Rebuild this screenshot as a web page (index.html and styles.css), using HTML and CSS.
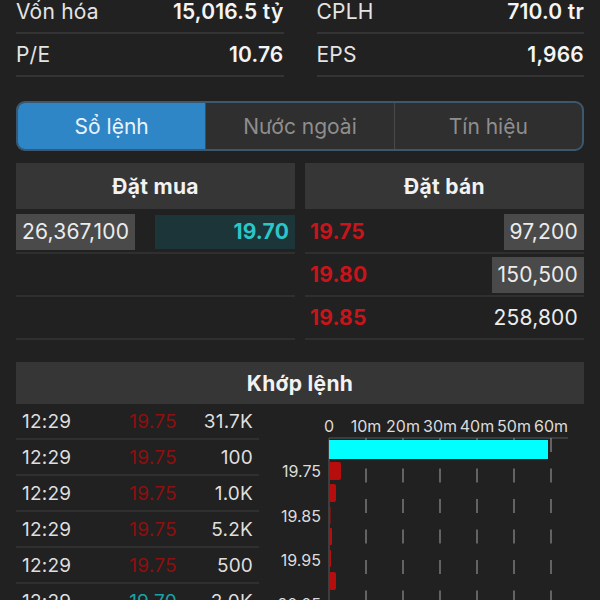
FILE: index.html
```html
<!DOCTYPE html>
<html lang="vi">
<head>
    <meta charset="UTF-8">
    <meta name="viewport" content="width=device-width, initial-scale=1.0">
    <title>Sổ lệnh</title>
    <link rel="stylesheet" href="styles.css">
</head>
<body>

    <!-- Chỉ số cơ bản -->
    <div class="stats">
        <div class="stat-col">
            <div class="stat-row"><span>Vốn hóa</span><b>15,016.5 tỷ</b></div>
            <div class="stat-row"><span>P/E</span><b>10.76</b></div>
        </div>
        <div class="stat-col">
            <div class="stat-row"><span>CPLH</span><b>710.0 tr</b></div>
            <div class="stat-row"><span>EPS</span><b>1,966</b></div>
        </div>
    </div>

    <!-- Tabs -->
    <div class="tabs">
        <div class="tab active">Sổ lệnh</div>
        <div class="tab">Nước ngoài</div>
        <div class="tab">Tín hiệu</div>
    </div>

    <!-- Sổ lệnh -->
    <div class="book">
        <div class="book-side">
            <div class="side-title">Đặt mua</div>
            <div class="book-row">
                <span class="vol-box">26,367,100</span>
                <span class="buy-price">19.70</span>
            </div>
            <div class="book-row"></div>
            <div class="book-row"></div>
        </div>
        <div class="book-side">
            <div class="side-title">Đặt bán</div>
            <div class="book-row">
                <span class="sell-price">19.75</span>
                <span class="vol-box">97,200</span>
            </div>
            <div class="book-row">
                <span class="sell-price">19.80</span>
                <span class="vol-box">150,500</span>
            </div>
            <div class="book-row">
                <span class="sell-price">19.85</span>
                <span class="vol-plain">258,800</span>
            </div>
        </div>
    </div>

    <!-- Khớp lệnh -->
    <div class="match-title">Khớp lệnh</div>
    <div class="match">
        <div class="trades">
            <div class="trade"><span>12:29</span><span class="t-price">19.75</span><span class="t-vol">31.7K</span></div>
            <div class="trade"><span>12:29</span><span class="t-price">19.75</span><span class="t-vol">100</span></div>
            <div class="trade"><span>12:29</span><span class="t-price">19.75</span><span class="t-vol">1.0K</span></div>
            <div class="trade"><span>12:29</span><span class="t-price">19.75</span><span class="t-vol">5.2K</span></div>
            <div class="trade"><span>12:29</span><span class="t-price">19.75</span><span class="t-vol">500</span></div>
            <div class="trade"><span>12:29</span><span class="t-price up">19.70</span><span class="t-vol">2.0K</span></div>
        </div>

        <svg class="chart" width="314" height="196" viewBox="0 0 314 196">
            <!-- trục x -->
            <g class="axis-label" text-anchor="middle">
                <text x="59" y="28">0</text>
                <text x="96" y="28">10m</text>
                <text x="133" y="28">20m</text>
                <text x="170" y="28">30m</text>
                <text x="207" y="28">40m</text>
                <text x="244" y="28">50m</text>
                <text x="281" y="28">60m</text>
            </g>
            <line x1="59" y1="34" x2="298" y2="34" stroke="#5a5a5a" stroke-width="1"/>
            <line x1="59" y1="34" x2="59" y2="196" stroke="#5a5a5a" stroke-width="1"/>

            <!-- lưới -->
            <g stroke="#7a7a7a" stroke-width="1.5" stroke-dasharray="14 16.5">
                <line x1="96" y1="34" x2="96" y2="196"/>
                <line x1="133" y1="34" x2="133" y2="196"/>
                <line x1="170" y1="34" x2="170" y2="196"/>
                <line x1="207" y1="34" x2="207" y2="196"/>
                <line x1="244" y1="34" x2="244" y2="196"/>
                <line x1="281" y1="34" x2="281" y2="196"/>
            </g>

            <!-- khối lượng -->
            <rect x="59" y="36" width="219" height="19" fill="#00ffff"/>
            <g fill="#b80d0d">
                <rect x="59" y="58" width="12" height="18" rx="2"/>
                <rect x="59" y="80" width="7" height="18" rx="2"/>
                <rect x="59" y="103" width="1.5" height="17"/>
                <rect x="59" y="124" width="3" height="17" rx="1"/>
                <rect x="59" y="146" width="2" height="17" rx="1"/>
                <rect x="59" y="168" width="7" height="18" rx="2"/>
            </g>

            <!-- trục y -->
            <g class="axis-label" text-anchor="end">
                <text x="51" y="73">19.75</text>
                <text x="51" y="118">19.85</text>
                <text x="51" y="162">19.95</text>
                <text x="51" y="206">20.05</text>
            </g>
        </svg>
    </div>

</body>
</html>
```

FILE: styles.css
```css
* {
    margin: 0;
    padding: 0;
    box-sizing: border-box;
}

body {
    font-family: 'Inter', 'Roboto', sans-serif;
    background-color: #212121;
    color: #ececec;
    overflow: hidden;
}

/* chỉ số */
.stats {
    display: grid;
    grid-template-columns: 1fr 1fr;
    column-gap: 33px;
    padding: 0 16px;
    margin-top: -9px;
}

.stat-row {
    display: flex;
    justify-content: space-between;
    align-items: center;
    height: 43px;
    border-bottom: 2px solid #343434;
    font-size: 21px;
    line-height: 1.1;
    letter-spacing: 0.2px;
}

.stat-row span {
    color: #e4e4e4;
}

.stat-row b {
    font-weight: 600;
    color: #f4f4f4;
}

/* tabs */
.tabs {
    display: flex;
    margin: 24px 16px 0;
    height: 50px;
    border: 2px solid #3b5870;
    border-radius: 9px;
    overflow: hidden;
    background-color: #2f2f2f;
}

.tab {
    flex: 1;
    display: flex;
    align-items: center;
    justify-content: center;
    font-size: 21px;
    color: #8e8e8e;
    border-left: 1px solid #4a4a4a;
}

.tab:first-child {
    border-left: none;
}

.tab.active {
    background-color: #2f86c6;
    color: #eaf3fb;
}

/* sổ lệnh */
.book {
    display: grid;
    grid-template-columns: 1fr 1fr;
    column-gap: 10px;
    padding: 0 16px;
    margin-top: 12px;
}

.side-title {
    height: 46px;
    margin-bottom: 2px;
    display: flex;
    align-items: center;
    justify-content: center;
    background-color: #363636;
    font-size: 21px;
    font-weight: 700;
    letter-spacing: 0.3px;
    color: #f2f2f2;
}

.book-row {
    display: flex;
    align-items: center;
    height: 43px;
    border-bottom: 2px solid #2f2f2f;
    font-size: 21px;
    letter-spacing: 0.2px;
}

.vol-box {
    height: 36px;
    padding: 0 6px;
    display: flex;
    align-items: center;
    background-color: #4a4a4a;
    color: #ececec;
}

.vol-plain {
    padding: 0 6px;
    margin-left: auto;
    color: #ececec;
}

.book-side:last-child .vol-box {
    margin-left: auto;
}

.buy-price {
    margin-left: auto;
    width: 140px;
    height: 34px;
    padding-right: 6px;
    display: flex;
    align-items: center;
    justify-content: flex-end;
    background-color: #1b3538;
    color: #2cc6c9;
    font-weight: 700;
}

.sell-price {
    padding-left: 5px;
    color: #c8141a;
    font-weight: 700;
}

/* khớp lệnh */
.match-title {
    margin: 22px 16px 0;
    height: 42px;
    display: flex;
    align-items: center;
    justify-content: center;
    background-color: #363636;
    font-size: 21px;
    font-weight: 700;
    letter-spacing: 0.3px;
    color: #f2f2f2;
}

.match {
    display: flex;
    gap: 11px;
    padding: 0 16px;
}

.trades {
    width: 243px;
    flex-shrink: 0;
}

.trade {
    display: grid;
    grid-template-columns: 100px 74px 1fr;
    align-items: center;
    height: 36px;
    border-bottom: 2px solid #2f2f2f;
    font-size: 19px;
    letter-spacing: 0.2px;
    color: #dedede;
}

.trade span:first-child {
    padding-left: 6px;
}

.t-price {
    text-align: center;
    color: #8c1010;
}

.t-price.up {
    color: #1aa3a6;
}

.t-vol {
    text-align: right;
    padding-right: 6px;
}

.chart {
    display: block;
    overflow: visible;
    flex-shrink: 0;
}

.axis-label {
    font-family: 'Inter', 'Roboto', sans-serif;
    font-size: 16px;
    fill: #dcdcdc;
}
```
